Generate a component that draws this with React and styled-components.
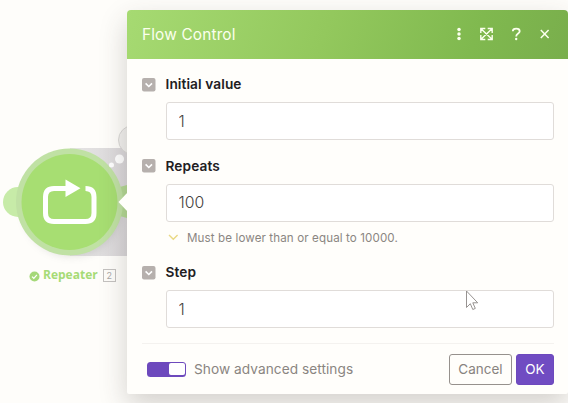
import React from "react";
import styled, { createGlobalStyle } from "styled-components";

const GlobalStyle = createGlobalStyle`
  * { box-sizing: border-box; }
  body { margin: 0; background: #fefdfa; font-family: Inter, "Liberation Sans", sans-serif; }
`;

const Canvas = styled.main`
  position: relative;
  width: 568px;
  height: 403px;
  overflow: hidden;
  padding: 10px 0 9px 127px;
  background: #fefdfa;
`;

const ModuleArt = styled.svg`
  position: absolute;
  left: 0;
  top: 120px;
`;

const ModuleLabel = styled.div`
  position: absolute;
  left: 29px;
  top: 266px;
  height: 18px;
  display: flex;
  align-items: center;
  color: #a6db76;
  font: 700 12px/18px "Open Sans", sans-serif;
`;

const LabelCheck = styled.svg`
  margin: 3px 3px 0 0;
`;

const ModuleNumber = styled.span`
  width: 13px;
  height: 13px;
  margin-left: 5px;
  border: 1px solid #c4c2c0;
  color: #aaa8a6;
  font: 400 9px/11px Inter, sans-serif;
  text-align: center;
`;

const Dialog = styled.section`
  position: relative;
  height: 384px;
  border-radius: 4px 4px 2px 2px;
  background: #fffefb;
  box-shadow: 0 11px 28px rgba(60, 50, 45, 0.22);
`;

const Pointer = styled.svg`
  position: absolute;
  left: -9px;
  top: 182px;
`;

const Header = styled.header`
  height: 49px;
  padding: 0 18px 0 15px;
  display: flex;
  align-items: center;
  border-radius: 4px 4px 0 0;
  background: linear-gradient(110deg, #a6da72 0%, #93c85d 45%, #80b94f 78%, #79ae4c 100%);
  color: #fbffee;
`;

const Title = styled.h1`
  flex: 1;
  margin: 0;
  font-size: 15.4px;
  font-weight: 400;
  letter-spacing: 0.15px;
`;

const HeaderIcons = styled.svg`
  display: block;
  margin-top: -1px;
`;

const Body = styled.div`
  height: 284px;
  padding: 15px 14.5px 0 15px;
`;

const Field = styled.div`
  height: ${(p) => p.$height}px;
`;

const FieldLabel = styled.label`
  height: 20px;
  display: flex;
  align-items: center;
  gap: 9.5px;
  color: #22201f;
  font-size: 13.7px;
  font-weight: 600;
  letter-spacing: 0.09px;
`;

const Collapse = styled.svg`
  flex: none;
  margin-top: 1px;
`;

const Input = styled.input`
  display: block;
  width: 388px;
  height: 38px;
  margin: 8px 0 0 23.5px;
  padding: 0 12px;
  border: 1px solid #e0dcd9;
  border-radius: 3px;
  outline: none;
  background: #fff;
  color: #454240;
  font: 300 15.8px Inter, sans-serif;
`;

const Hint = styled.div`
  display: flex;
  align-items: center;
  gap: 8px;
  height: 18px;
  margin: 7px 0 0 26px;
  color: #8b8682;
  font-size: 11.6px;
  letter-spacing: 0.11px;
`;

const Footer = styled.footer`
  height: 51px;
  margin: 0 14px 0 15px;
  padding-left: 5px;
  display: flex;
  align-items: center;
  border-top: 1px solid #f4f2ef;
`;

const Toggle = styled.span`
  width: 39px;
  height: 15px;
  padding: 1.5px;
  display: flex;
  justify-content: flex-end;
  border-radius: 3.5px;
  background: #6d49bd;
`;

const Thumb = styled.span`
  width: 16px;
  border-radius: 2px;
  background: #fff;
`;

const ToggleText = styled.span`
  flex: 1;
  margin-left: 8px;
  color: #8a8581;
  font-size: 13.7px;
  letter-spacing: 0.04px;
`;

const Button = styled.button`
  width: ${(p) => (p.$primary ? 38 : 63)}px;
  height: 31px;
  margin-left: ${(p) => (p.$primary ? 4 : 0)}px;
  padding: 0;
  border: 1px solid ${(p) => (p.$primary ? "#6d49bd" : "#96918d")};
  border-radius: 3px;
  background: ${(p) => (p.$primary ? "#704cc2" : "#fffefb")};
  color: ${(p) => (p.$primary ? "#fff" : "#88837f")};
  font: 400 13.5px Inter, sans-serif;
`;

const Cursor = styled.svg`
  position: absolute;
  left: 465px;
  top: 290px;
`;

function FieldName({ children }) {
  return (
    <FieldLabel>
      <Collapse width="14" height="14" viewBox="0 0 14 14">
        <rect width="13.5" height="13.5" rx="2" fill="#b6b0ad" />
        <path d="M3.6 5.4 6.8 8.5l3.2-3.1" fill="none" stroke="#fff" strokeWidth="1.6" />
      </Collapse>
      {children}
    </FieldLabel>
  );
}

function RepeaterModule() {
  return (
    <>
      <ModuleArt width="135" height="145" viewBox="0 120 135 145">
        <defs>
          <linearGradient id="tail">
            <stop offset="0" stopColor="#e6e5e4" />
            <stop offset="1" stopColor="#d8d5d8" />
          </linearGradient>
          <filter id="soft" x="-30%" y="-30%" width="160%" height="160%">
            <feGaussianBlur stdDeviation="4" />
          </filter>
        </defs>
        <path d="M70 148h65v108H70z" fill="url(#tail)" />
        <ellipse cx="72" cy="210" rx="48" ry="46" fill="#777" opacity=".22" filter="url(#soft)" />
        <circle cx="18" cy="202" r="15" fill="#c7eba8" />
        <path d="M110 188q9 0 17-3v33q-8-3-17-3z" fill="#b3d893" />
        <circle cx="69.5" cy="202" r="53.5" fill="#c0e1a4" />
        <circle cx="69.5" cy="202" r="48" fill="#a7de72" />
        <path d="M67 188.500H54Q45.500 188.500 45.500 197v16q0 8.500 8.500 8.500h31.500q8.500 0 8.500-8.500V197q0-8.500-8.500-8.500" fill="none" stroke="#fff" strokeWidth="5" />
        <path d="M65.500 179.500v17.500l15-8.750z" fill="#fff" />
        <circle cx="133" cy="140" r="14.500" fill="#f1f0ee" stroke="#dad8d6" />
        <circle cx="119.500" cy="159" r="4.500" fill="#fff" />
        <circle cx="111.500" cy="165" r="2.500" fill="#fff" />
      </ModuleArt>
      <ModuleLabel>
        <LabelCheck width="11" height="11" viewBox="0 0 11 11">
          <circle cx="5.5" cy="5.5" r="5" fill="#a5d878" />
          <path d="m3 5.6 1.800 1.700 3.100-3.400" fill="none" stroke="#fff" strokeWidth="1.2" />
        </LabelCheck>
        Repeater
        <ModuleNumber>2</ModuleNumber>
      </ModuleLabel>
    </>
  );
}

export default function App() {
  return (
    <>
      <GlobalStyle />
      <Canvas>
        <RepeaterModule />
        <Dialog>
          <Pointer width="10" height="20" viewBox="0 0 10 20">
            <path d="m10 0-9.500 10L10 20z" fill="#fffefb" />
          </Pointer>
          <Header>
            <Title>Flow Control</Title>
            <HeaderIcons width="96" height="16" viewBox="454 26 96 16" fill="none" stroke="currentColor">
              <g fill="currentColor" stroke="none">
                <circle cx="459" cy="29.5" r="1.75" />
                <circle cx="459" cy="34" r="1.75" />
                <circle cx="459" cy="38.5" r="1.75" />
              </g>
              <path d="M480.800 33v-4.500h4.500m2.400 0h4.500V33m0 2v4.500h-4.500m-2.400 0h-4.500V35M481 28.700l11 10.600m0-10.600-11 10.600" strokeWidth="1.4" />
              <path d="M512.800 31.200c0-3.400 6.900-3.400 6.900 0 0 2.400-3.500 2.200-3.500 5.200" strokeWidth="1.8" />
              <circle cx="516.2" cy="39" r="1.2" fill="currentColor" stroke="none" />
              <path d="m540.800 30 7.800 8m0-8-7.800 8" strokeWidth="1.5" />
            </HeaderIcons>
          </Header>
          <Body>
            <Field $height={81.5}>
              <FieldName>Initial value</FieldName>
              <Input aria-label="Initial value" defaultValue="1" />
            </Field>
            <Field $height={106.5}>
              <FieldName>Repeats</FieldName>
              <Input aria-label="Repeats" defaultValue="100" />
              <Hint>
                <svg width="11" height="7" viewBox="0 0 11 7">
                  <path d="m1 1 4.300 4.300L9.600 1" fill="none" stroke="#ead984" strokeWidth="1.4" />
                </svg>
                Must be lower than or equal to 10000.
              </Hint>
            </Field>
            <Field $height={80}>
              <FieldName>Step</FieldName>
              <Input aria-label="Step" defaultValue="1" />
            </Field>
          </Body>
          <Footer>
            <Toggle><Thumb /></Toggle>
            <ToggleText>Show advanced settings</ToggleText>
            <Button>Cancel</Button>
            <Button $primary>OK</Button>
          </Footer>
        </Dialog>
        <Cursor width="14" height="22" viewBox="0 0 14 22">
          <path d="M1.500 1v16.500l3.800-3.800 2.500 5.800 2.500-1.100-2.500-5.600h4.900z" fill="#fff" stroke="#8b8784" strokeWidth=".9" />
        </Cursor>
      </Canvas>
    </>
  );
}
